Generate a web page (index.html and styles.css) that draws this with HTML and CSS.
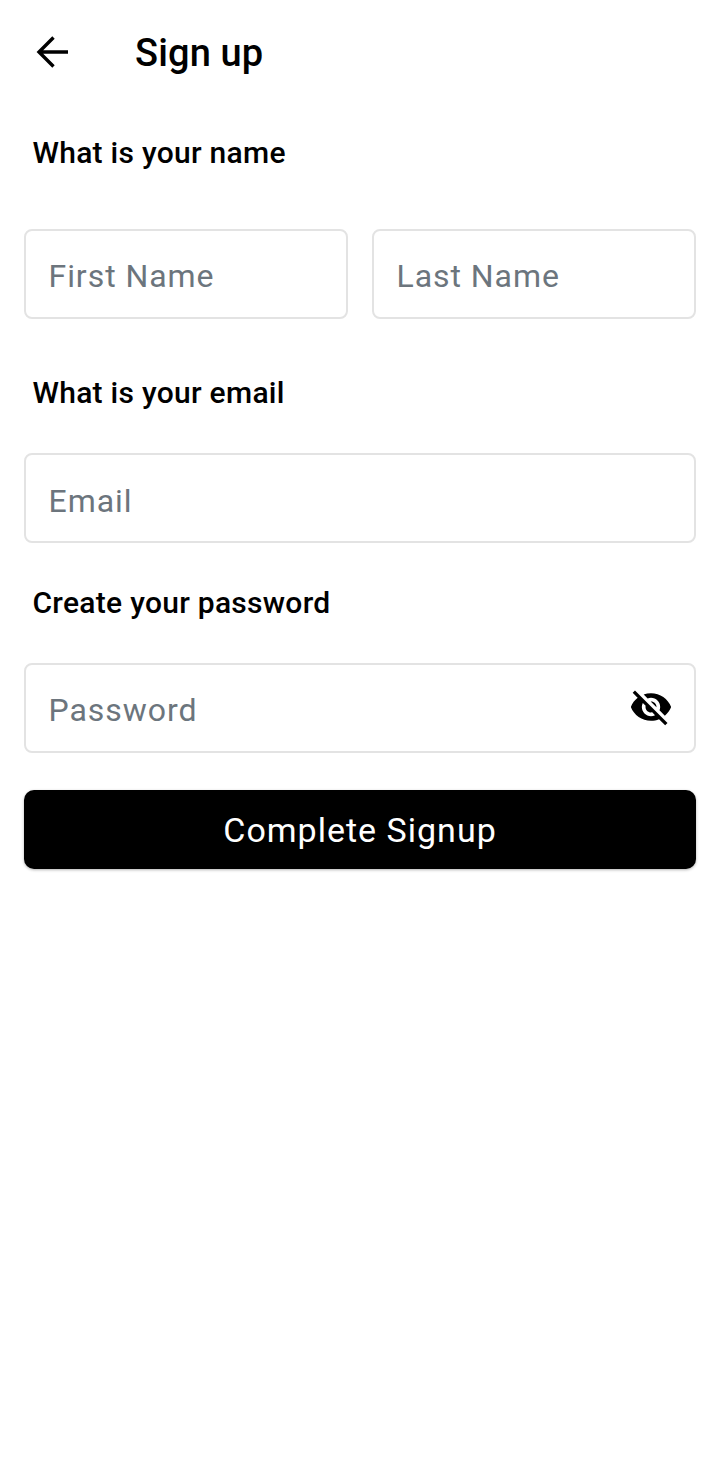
FILE: index.html
```html
<!DOCTYPE html>
<html>
<head>
    <title>Sign up</title>
    <meta charset="utf-8" />
    <link rel="stylesheet" href="styles.css">
</head>
<body>

<!-- App bar -->
<header class="app-bar">
    <button class="back-button" aria-label="Back">
        <svg viewBox="0 0 48 48" width="48" height="48" fill="none" stroke="#000" stroke-width="3.4"><path d="M40 24H11M25.5 9.5L11 24l14.500 14.500"/></svg>
    </button>
    <h1>Sign up</h1>
</header>

<form class="signup-form">
    <h2 class="label label-name">What is your name</h2>
    <div class="name-row">
        <input class="field" type="text" placeholder="First Name">
        <input class="field" type="text" placeholder="Last Name">
    </div>

    <h2 class="label label-email">What is your email</h2>
    <input class="field field-email" type="email" placeholder="Email">

    <h2 class="label label-password">Create your password</h2>
    <div class="password-box">
        <input class="field" type="password" placeholder="Password">
        <svg class="eye-icon" viewBox="0 0 24 24" width="44" height="44"><path d="M12 7c2.76 0 5 2.24 5 5 0 .65-.13 1.26-.36 1.83l2.92 2.92c1.51-1.26 2.7-2.89 3.43-4.75-1.73-4.39-6-7.5-11-7.5-1.4 0-2.74.25-3.98.7l2.16 2.16C10.74 7.13 11.35 7 12 7zM2 4.27l2.28 2.28.46.46C3.08 8.3 1.78 10.02 1 12c1.73 4.39 6 7.5 11 7.5 1.55 0 3.03-.3 4.38-.84l.42.42L19.73 22 21 20.73 3.27 3 2 4.27zM7.53 9.8l1.55 1.55c-.05.21-.08.43-.08.65 0 1.66 1.34 3 3 3 .22 0 .44-.03.65-.08l1.55 1.55c-.67.33-1.41.53-2.2.53-2.76 0-5-2.24-5-5 0-.79.2-1.53.53-2.2zm4.31-.78l3.15 3.15.02-.16c0-1.66-1.34-3-3-3l-.17.01z"/></svg>
    </div>

    <button class="submit-button" type="button">Complete Signup</button>
</form>

</body>
</html>
```

FILE: styles.css
```css
/* Base */
body {
    margin: 0;
    min-height: 1465px;
    background: #fff;
    color: #000;
    font-family: Roboto, sans-serif;
}

/* App bar */
.app-bar {
    display: flex;
    align-items: center;
    height: 104px;
    padding-left: 28px;
}

.back-button {
    display: flex;
    padding: 0;
    border: none;
    background: none;
}

.app-bar h1 {
    margin: 2px 0 0 59px;
    font-size: 38px;
    font-weight: 500;
    letter-spacing: 0.15px;
}

/* Form */
.signup-form {
    display: flex;
    flex-direction: column;
    padding: 0 24px;
}

.label {
    margin: 0;
    padding-left: 8.500px;
    font-size: 30px;
    font-weight: 480;
    letter-spacing: 0.28px;
    line-height: 36px;
}

.label-name {
    margin-top: 31px;
    margin-bottom: 58px;
}

.label-email {
    margin-top: 56px;
    margin-bottom: 42px;
}

.label-password {
    margin-top: 42px;
    margin-bottom: 42px;
}

.name-row {
    display: flex;
    gap: 24px;
}

.field {
    box-sizing: border-box;
    width: 100%;
    min-width: 0;
    height: 90px;
    padding: 4px 22.500px 0;
    border: 2px solid #e3e3e3;
    border-radius: 8px;
    outline: none;
    font-family: Roboto, sans-serif;
    font-size: 32px;
    letter-spacing: 0.95px;
    color: #000;
}

.field-email {
    padding-top: 6px;
}

.field::placeholder {
    color: #6c757d;
    opacity: 1;
}

.password-box {
    position: relative;
}

.eye-icon {
    position: absolute;
    top: 22px;
    right: 23px;
}

.submit-button {
    height: 79px;
    margin-top: 37px;
    border: none;
    border-radius: 10px;
    background: #000;
    box-shadow: 0 1px 3px rgba(0,0,0,0.3);
    color: #fff;
    font-family: Roboto, sans-serif;
    font-size: 34px;
    letter-spacing: 1px;
}
```
